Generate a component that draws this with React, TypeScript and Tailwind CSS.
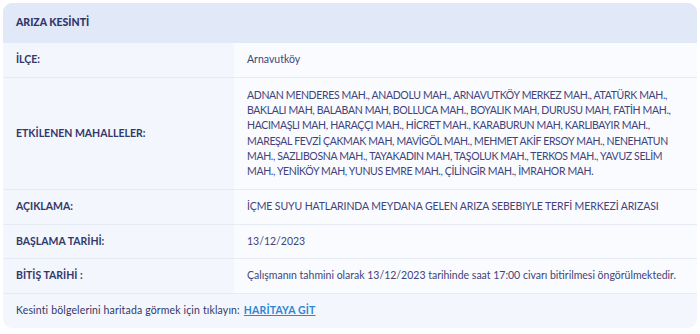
import React from 'react';

const font = { fontFamily: 'Lato, "Noto Sans", sans-serif' };

const mahalleLines = [
  'ADNAN MENDERES MAH., ANADOLU MAH., ARNAVUTKÖY MERKEZ MAH., ATATÜRK MAH.,',
  'BAKLALI MAH, BALABAN MAH, BOLLUCA MAH., BOYALIK MAH, DURUSU MAH, FATİH MAH.,',
  'HACIMAŞLI MAH, HARAÇÇI MAH., HİCRET MAH., KARABURUN MAH, KARLIBAYIR MAH.,',
  'MAREŞAL FEVZİ ÇAKMAK MAH, MAVİGÖL MAH., MEHMET AKİF ERSOY MAH., NENEHATUN',
  'MAH., SAZLIBOSNA MAH., TAYAKADIN MAH, TAŞOLUK MAH., TERKOS MAH., YAVUZ SELİM',
  'MAH., YENİKÖY MAH, YUNUS EMRE MAH., ÇİLİNGİR MAH., İMRAHOR MAH.',
];

const Row = ({ label, children, className, first }: { label: string; children: React.ReactNode; className: string; first?: boolean }) => (
  <div className={'flex ' + (first ? '' : 'border-t border-[#e6eaf2] ') + className}>
    <div className="w-[231px] shrink-0 bg-[#f3f6fc] px-[13px] flex items-center text-[10.5px] font-bold text-[#33386b]">
      {label}
    </div>
    <div className="flex-1 min-w-0 bg-[#fafbfe] px-[13px] flex items-center text-[10.5px] text-[#41447a]">
      {children}
    </div>
  </div>
);

export default function App() {
  return (
    <div className="w-[700px] h-[334px] bg-white p-[3px]" style={font}>
      <div className="rounded-[9px] overflow-hidden bg-[#f3f6fc] h-[325px] flex flex-col">
        <div className="h-[40px] shrink-0 bg-[#e1e8f8] px-[13px] flex items-center text-[10.5px] font-black text-[#2f3567]">
          ARIZA KESİNTİ
        </div>
        <Row first label="İLÇE:" className="h-[34px]">Arnavutköy</Row>
        <Row label="ETKİLENEN MAHALLELER:" className="h-[112px]">
          <div className="leading-[15.2px] tracking-[-0.35px]">
            {mahalleLines.map((l) => (
              <div key={l} className="whitespace-nowrap">{l}</div>
            ))}
          </div>
        </Row>
        <Row label="AÇIKLAMA:" className="h-[35px]">
          <span className="whitespace-nowrap tracking-[-0.12px]">İÇME SUYU HATLARINDA MEYDANA GELEN ARIZA SEBEBIYLE TERFİ MERKEZİ ARIZASI</span>
        </Row>
        <Row label="BAŞLAMA TARİHİ:" className="h-[34px]">13/12/2023</Row>
        <Row label="BİTİŞ TARİHİ :" className="h-[35px]">
          <span className="whitespace-nowrap">Çalışmanın tahmini olarak 13/12/2023 tarihinde saat 17:00 civarı bitirilmesi öngörülmektedir.</span>
        </Row>
        <div className="flex-1 border-t border-[#e6eaf2] px-[13px] flex items-center text-[10.5px] tracking-[0.15px] text-[#33386b]">
          <span>Kesinti bölgelerini haritada görmek için tıklayın:</span>
          <a className="ml-[4px] font-bold text-[#2f86d4] underline" href="#">HARİTAYA GİT</a>
        </div>
      </div>
    </div>
  );
}
